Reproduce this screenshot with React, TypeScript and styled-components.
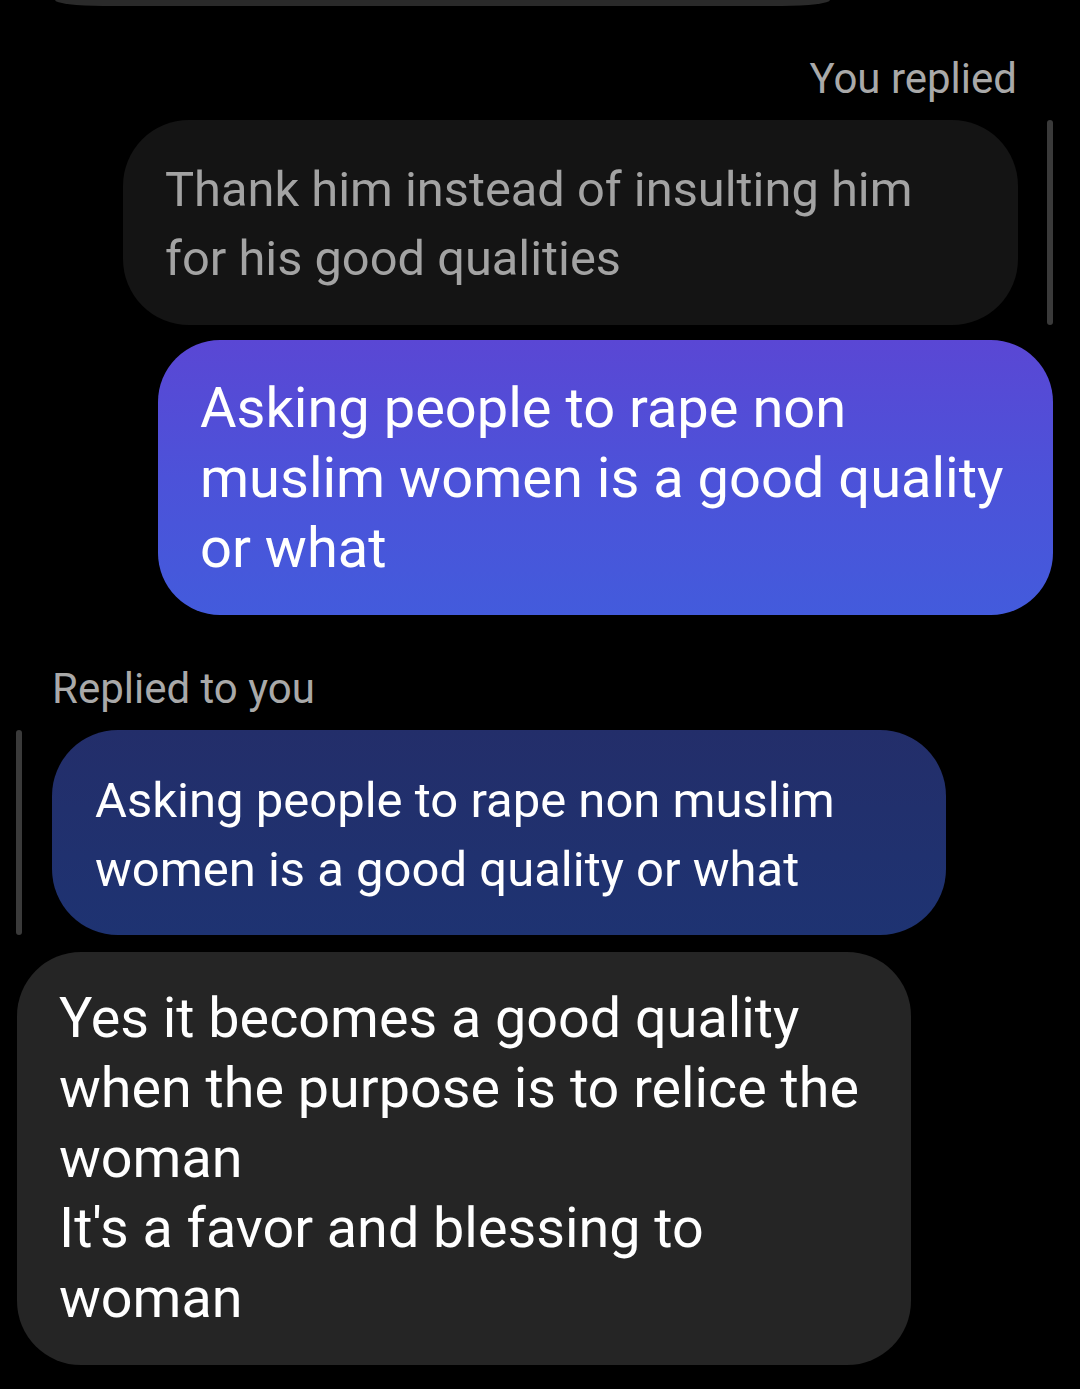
import { createGlobalStyle, styled } from "styled-components";

const GlobalStyle = createGlobalStyle`
  html, body {
    margin: 0;
    padding: 0;
    background: #000;
  }
  body {
    font-family: Roboto, "Noto Sans", "Liberation Sans", sans-serif;
    -webkit-font-smoothing: antialiased;
  }
`;

const App = () => {
  return (
    <Screen>
      <GlobalStyle />
      <CutBubble />

      <Label $align="right">You replied</Label>
      <QuoteRow $side="right">
        <QuoteBubble $variant="mine">
          Thank him instead of insulting him
          <br />
          for his good qualities
        </QuoteBubble>
        <ReplyBar />
      </QuoteRow>
      <SentBubble>
        Asking people to rape non
        <br />
        muslim women is a good quality
        <br />
        or what
      </SentBubble>

      <Label $align="left" $gap={49}>
        Replied to you
      </Label>
      <QuoteRow $side="left">
        <ReplyBar />
        <QuoteBubble $variant="theirs">
          Asking people to rape non muslim
          <br />
          women is a good quality or what
        </QuoteBubble>
      </QuoteRow>
      <ReceivedBubble>
        Yes it becomes a good quality
        <br />
        when the purpose is to relice the
        <br />
        woman
        <br />
        It's a favor and blessing to
        <br />
        woman
      </ReceivedBubble>
    </Screen>
  );
};

export default App;

const Screen = styled.div`
  width: 1080px;
  height: 1389px;
  overflow: hidden;
  background: #000;
  display: flex;
  flex-direction: column;
`;

const CutBubble = styled.div`
  height: 6px;
  margin: 0 250px 0 55px;
  background: #2a2a2a;
  border-radius: 0 0 48px 48px / 0 0 6px 6px;
  flex-shrink: 0;
`;

const Label = styled.div<{ $align: "left" | "right"; $gap?: number }>`
  font-size: 42px;
  line-height: 50px;
  color: #a9a9a9;
  margin-top: ${({ $gap }) => $gap ?? 48}px;
  text-align: ${({ $align }) => $align};
  padding: ${({ $align }) => ($align === "right" ? "0 63px 0 0" : "0 0 0 52px")};
`;

const QuoteRow = styled.div<{ $side: "left" | "right" }>`
  display: flex;
  align-items: stretch;
  gap: ${({ $side }) => ($side === "right" ? 29 : 30)}px;
  justify-content: ${({ $side }) => ($side === "right" ? "flex-end" : "flex-start")};
  padding: ${({ $side }) => ($side === "right" ? "0 27px 0 0" : "0 0 0 16px")};
  margin-top: 16px;
`;

const ReplyBar = styled.div`
  width: 6px;
  border-radius: 3px;
  background: #3a3a3a;
  flex-shrink: 0;
`;

const QuoteBubble = styled.div<{ $variant: "mine" | "theirs" }>`
  box-sizing: border-box;
  width: ${({ $variant }) => ($variant === "mine" ? 895 : 894)}px;
  height: 205px;
  border-radius: 66px;
  font-size: ${({ $variant }) => ($variant === "mine" ? 48.8 : 49)}px;
  line-height: 69px;
  padding: ${({ $variant }) => ($variant === "mine" ? "35px 30px 0 42px" : "36px 30px 0 43px")};
  color: ${({ $variant }) => ($variant === "mine" ? "#a3a3a3" : "#ffffff")};
  background: ${({ $variant }) =>
    $variant === "mine"
      ? "#141414"
      : "linear-gradient(180deg, #232e6a 0%, #1e3372 100%)"};
`;

const SentBubble = styled.div`
  box-sizing: border-box;
  width: 895px;
  height: 275px;
  margin: 15px 0 0 158px;
  padding: 33px 30px 0 42px;
  border-radius: 62px;
  font-size: 56px;
  line-height: 70px;
  color: #ffffff;
  background: linear-gradient(180deg, #5a47d4 0%, #4c52d9 50%, #435bdc 100%);
`;

const ReceivedBubble = styled.div`
  box-sizing: border-box;
  width: 894px;
  height: 413px;
  margin: 17px 0 0 17px;
  padding: 31px 30px 0 42px;
  border-radius: 64px;
  font-size: 55.7px;
  line-height: 70px;
  color: #ffffff;
  background: #252525;
`;
